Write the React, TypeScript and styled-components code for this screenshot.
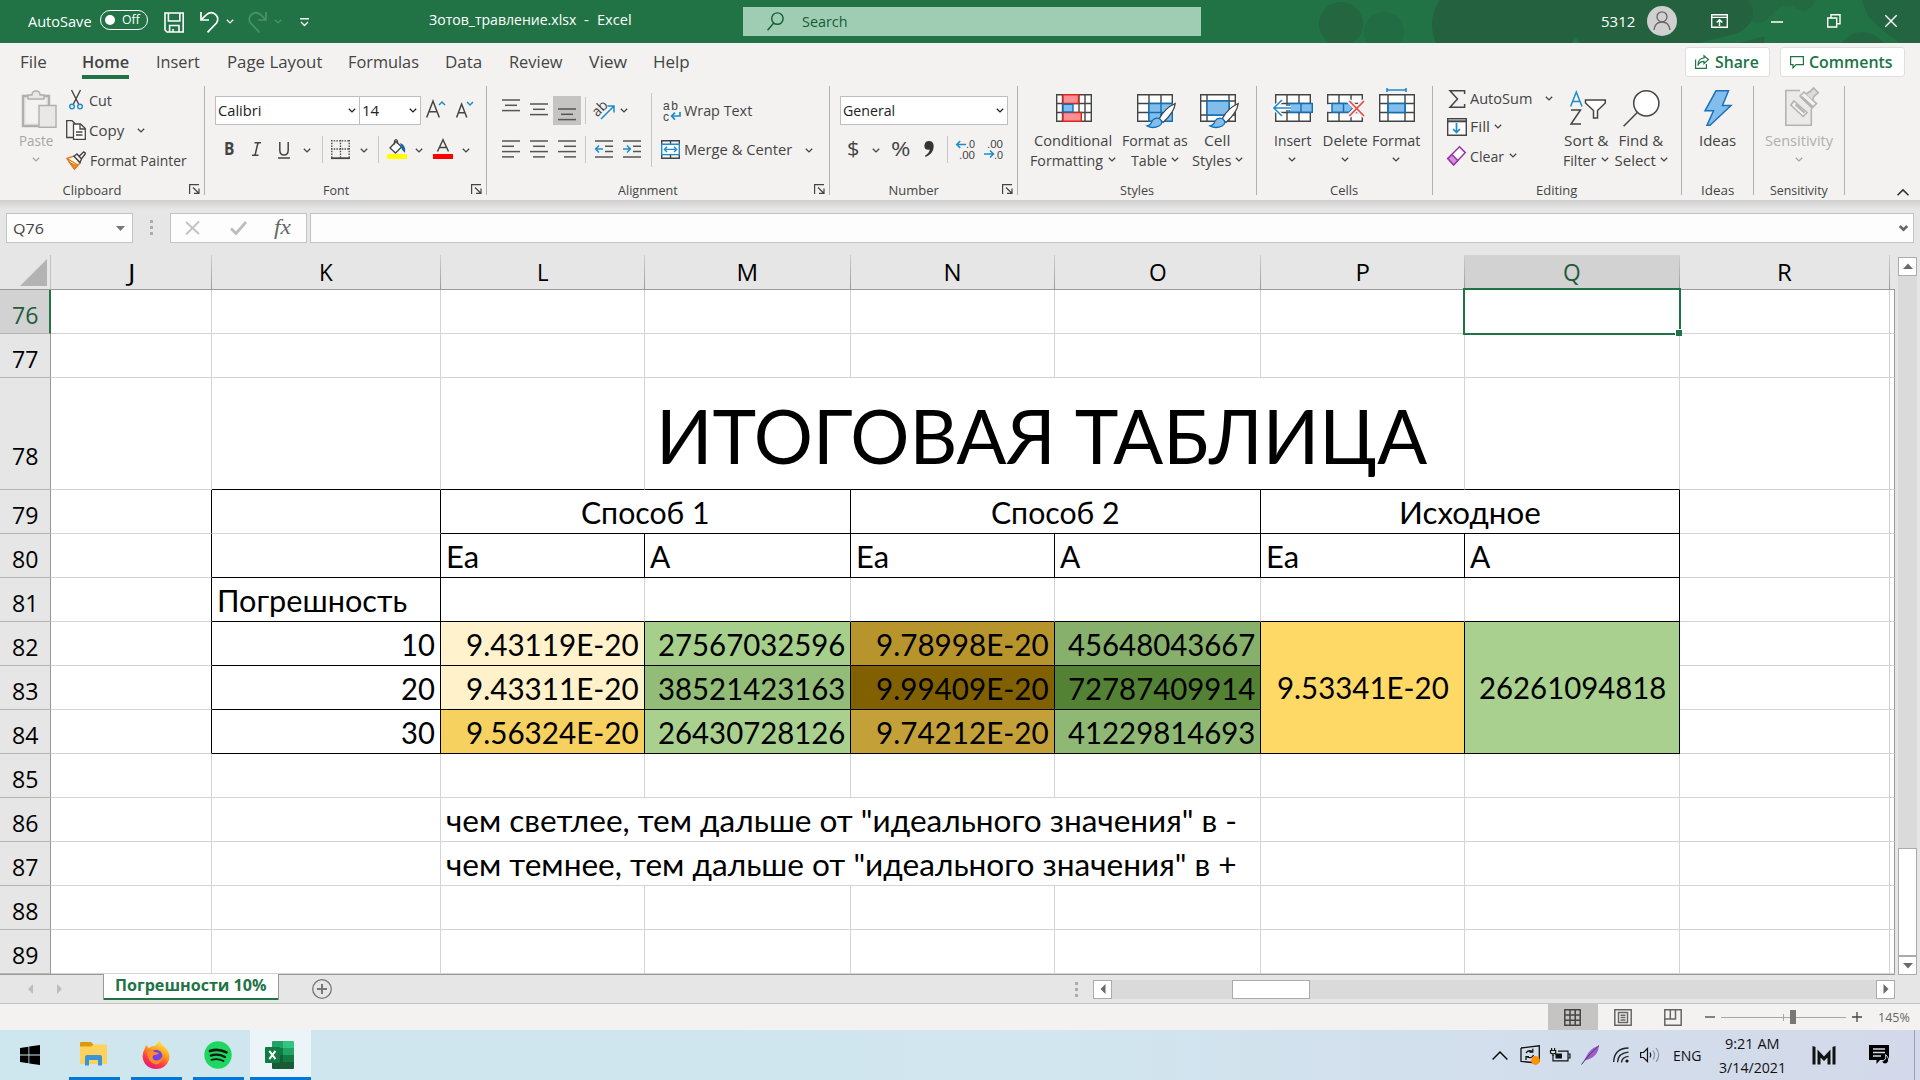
import React, { useLayoutEffect, useRef, useState } from 'react';
import styled, { createGlobalStyle, css } from 'styled-components';

const UI = `"Open Sans", "Noto Sans", sans-serif`;
const SHEET = `Lato, "Open Sans", sans-serif`;
const INK = '#444444';
const BLUE = '#1e8bcd';
const GREEN = '#217346';

const Global = createGlobalStyle`
  * { box-sizing: border-box; }
  body { margin: 0; overflow: hidden; background: #e6e6e6; }
  svg { display: block; flex: none; overflow: visible; }
`;

/* ---------- text set to a known width ---------- */

const FitBox = styled.span<{ $w: number; $ml?: number; $size?: number; $color?: string; $bold?: boolean; $font?: string; $weight?: number }>`
  display: block;
  flex: none;
  width: ${(p) => p.$w}px;
  margin-left: ${(p) => p.$ml ?? 0}px;
  font-family: ${(p) => p.$font ?? UI};
  font-size: ${(p) => p.$size ?? 15}px;
  line-height: 1.36;
  font-weight: ${(p) => p.$weight ?? (p.$bold ? 600 : 400)};
  color: ${(p) => p.$color ?? INK};
  white-space: nowrap;
`;
const FitInner = styled.span`
  display: inline-block;
  transform-origin: 0 50%;
`;

type FitProps = { w: number; ml?: number; size?: number; color?: string; bold?: boolean; font?: string; weight?: number; children: React.ReactNode };
function Fit({ w, ml, size, color, bold, font, weight, children }: FitProps) {
  const ref = useRef<HTMLSpanElement>(null);
  const [k, setK] = useState(1);
  useLayoutEffect(() => {
    if (ref.current) setK(w / ref.current.offsetWidth);
  }, [w, children]);
  return (
    <FitBox $w={w} $ml={ml} $size={size} $color={color} $bold={bold} $font={font} $weight={weight}>
      <FitInner ref={ref} style={{ transform: `scaleX(${k})` }}>{children}</FitInner>
    </FitBox>
  );
}

/* ---------- generic parts ---------- */

const Screen = styled.div`
  width: 1920px;
  height: 1080px;
  display: flex;
  flex-direction: column;
  overflow: hidden;
`;
const Row = styled.div<{ $h?: number; $mt?: number; $pl?: number }>`
  display: flex;
  align-items: center;
  flex: none;
  height: ${(p) => (p.$h ? `${p.$h}px` : 'auto')};
  margin-top: ${(p) => p.$mt ?? 0}px;
  padding-left: ${(p) => p.$pl ?? 0}px;
`;
const Item = styled.div<{ $ml?: number; $mt?: number }>`
  display: flex;
  flex: none;
  margin-left: ${(p) => p.$ml ?? 0}px;
  margin-top: ${(p) => p.$mt ?? 0}px;
`;
const Column = styled.div<{ $w?: number; $ml?: number }>`
  display: flex;
  flex-direction: column;
  flex: none;
  width: ${(p) => (p.$w ? `${p.$w}px` : 'auto')};
  margin-left: ${(p) => p.$ml ?? 0}px;
`;
const Rule = styled.div<{ $h?: number; $ml?: number }>`
  flex: none;
  width: 1px;
  height: ${(p) => p.$h ?? 27}px;
  margin-left: ${(p) => p.$ml ?? 0}px;
  background: #c8c6c4;
`;

const Chev = ({ ml = 0, mt = 0, color = INK }: { ml?: number; mt?: number; color?: string }) => (
  <Item $ml={ml} $mt={mt}>
    <svg width="8" height="5" viewBox="0 0 8 5"><path d="M.8.7 4 3.9 7.2.7" fill="none" stroke={color} strokeWidth="1.3" /></svg>
  </Item>
);

/* ---------- title bar ---------- */

const TitleBar = styled.header`
  position: relative;
  display: flex;
  align-items: center;
  flex: none;
  height: 43px;
  background: ${GREEN};
`;
const TitleArt = styled.svg`
  position: absolute;
  right: 0;
  top: 0;
  overflow: hidden;
`;
const TitleItems = styled.div`
  position: relative;
  display: flex;
  align-items: center;
  height: 43px;
`;
const Toggle = styled.div`
  display: flex;
  align-items: center;
  flex: none;
  width: 48px;
  height: 20px;
  margin-left: 8px;
  margin-top: -3px;
  border: 1.5px solid #fff;
  border-radius: 10px;
`;
const Knob = styled.div`
  width: 10px;
  height: 10px;
  margin-left: 4px;
  border-radius: 50%;
  background: #fff;
`;
const SearchBox = styled.div`
  display: flex;
  align-items: center;
  flex: none;
  width: 458px;
  height: 29px;
  margin-left: 111px;
  background: #9fcdb3;
`;

const Title = () => (
  <TitleBar>
    <TitleArt width="620" height="43" viewBox="1300 0 620 43">
      <g fill="#24623f">
        <circle cx="1341" cy="24" r="22" opacity=".75" />
        <circle cx="1384" cy="32" r="20" opacity=".4" />
        <path d="M1440 0H1566Q1558 20 1577 32L1572 43H1436Q1426 20 1440 0Z" />
        <path d="M1563 0H1748Q1762 20 1738 33L1700 43H1580Q1560 20 1563 0Z" />
        <path d="M1740 43 1765 36 1764 43ZM1842 43Q1850 32 1862 32T1884 43ZM1862 0H1920V43H1900Q1880 30 1868 16Z" opacity=".8" />
        <path d="M1735 0H1815Q1808 16 1796 8T1770 16 1745 12Z" opacity=".6" />
      </g>
    </TitleArt>
    <TitleItems>
      <Fit ml={28} w={64} size={15} color="#fff">AutoSave</Fit>
      <Toggle>
        <Knob />
        <Fit ml={7} w={18} size={13} color="#fff">Off</Fit>
      </Toggle>
      <Item $ml={16} $mt={1}>
        <svg width="20" height="21" viewBox="0 0 20 21" fill="none" stroke="#fff" strokeWidth="1.6"><path d="M1 1H19.2V20H3L1 18ZM4.4 1V9H15.8V1M5.6 20V13.5H15V20M9 20V17" /></svg>
      </Item>
      <Item $ml={16} $mt={1}>
        <svg width="19" height="21" viewBox="0 0 19 21" fill="none" stroke="#fff" strokeWidth="1.7"><path d="M1 0V8H9M1.3 7.6 6.5 2.6C13-2.5 20.5 4.5 16.5 11L7.5 20.3" /></svg>
      </Item>
      <Chev ml={7} color="#fff" />
      <Item $ml={14} $mt={1}>
        <svg width="19" height="21" viewBox="0 0 19 21" fill="none" stroke="#4c9269" strokeWidth="1.7"><path d="M18 0V8H10M17.7 7.6 12.5 2.6C6-2.5-1.5 4.5 2.5 11L11.5 20.3" /></svg>
      </Item>
      <Chev ml={7} color="#4c9269" />
      <Item $ml={18} $mt={1}>
        <svg width="9" height="9" viewBox="0 0 9 9" fill="none" stroke="#fff" strokeWidth="1.4"><path d="M0 .8H9M1 4 4.5 7.5 8 4" /></svg>
      </Item>
      <Item $ml={120} $mt={-4}><Fit w={147} size={15} color="#fff">Зотов_травление.xlsx</Fit></Item>
      <Item $ml={8} $mt={-4}><Fit w={5} size={15} color="#fff">-</Fit></Item>
      <Item $ml={8} $mt={-4}><Fit w={35} size={15} color="#fff">Excel</Fit></Item>
      <SearchBox>
        <Item $ml={24} $mt={-1}>
          <svg width="17" height="19" viewBox="0 0 17 19" fill="none" stroke="#155c33" strokeWidth="1.4"><circle cx="10.4" cy="6.6" r="5.7" /><path d="M6.8 11 .5 18.2" /></svg>
        </Item>
        <Fit ml={18} w={46} size={15} color="#155c33">Search</Fit>
      </SearchBox>
      <Fit ml={400} w={34} size={15} color="#fff">5312</Fit>
      <Item $ml={12} $mt={-1}>
        <svg width="30" height="30" viewBox="0 0 30 30"><circle cx="15" cy="15" r="15" fill="#d0d0d0" /><g fill="none" stroke="#666" strokeWidth="1.3"><circle cx="15" cy="10.8" r="5" /><path d="M7 24Q8 16 15 16T23 24" /></g></svg>
      </Item>
      <Item $ml={34} $mt={-1}>
        <svg width="17" height="14" viewBox="0 0 17 14" fill="none" stroke="#fff" strokeWidth="1.4"><path d="M.7.7H16.3V13.3H.7ZM.7 3.4H16.3M8.5 12V6M5.6 8.6 8.5 5.7 11.4 8.6" /></svg>
      </Item>
      <Item $ml={43}><svg width="12" height="2" viewBox="0 0 12 2"><path d="M0 1H12" stroke="#fff" strokeWidth="1.5" /></svg></Item>
      <Item $ml={44} $mt={-1}>
        <svg width="14" height="14" viewBox="0 0 14 14" fill="none" stroke="#fff" strokeWidth="1.4"><path d="M.7 4H9.7V13H.7ZM4 4V.8H13V9.8H9.8" /></svg>
      </Item>
      <Item $ml={44} $mt={-1}><svg width="12" height="12" viewBox="0 0 12 12"><path d="M.3.3 11.7 11.7M11.7.3.3 11.7" stroke="#fff" strokeWidth="1.4" /></svg></Item>
    </TitleItems>
  </TitleBar>
);

/* ---------- ribbon tabs ---------- */

const TabBar = styled.nav`
  display: flex;
  flex: none;
  height: 43px;
  background: #f3f2f1;
`;
const TabItem = styled.div<{ $ml: number; $active?: boolean }>`
  height: 36px;
  margin-left: ${(p) => p.$ml}px;
  padding-top: 7px;
  ${(p) => p.$active && css`border-bottom: 4px solid ${GREEN};`}
`;
const WhiteButton = styled.div<{ $w: number; $ml: number }>`
  display: flex;
  align-items: center;
  width: ${(p) => p.$w}px;
  height: 30px;
  margin: 4px 0 0 ${(p) => p.$ml}px;
  padding-left: 9px;
  background: #fff;
  border: 1px solid #e1dfdd;
  border-radius: 3px;
`;
const TABS: [string, number, number][] = [
  ['File', 20, 27], ['Home', 35, 47], ['Insert', 27, 44], ['Page Layout', 27, 95], ['Formulas', 26, 71],
  ['Data', 26, 37], ['Review', 27, 54], ['View', 26, 38], ['Help', 26, 37],
];
const Tabs = () => (
  <TabBar>
    {TABS.map(([t, ml, w]) => (
      <TabItem key={t} $ml={ml} $active={t === 'Home'}>
        <Fit w={w} size={17} bold={t === 'Home'}>{t}</Fit>
      </TabItem>
    ))}
    <WhiteButton $w={85} $ml={995}>
      <svg width="14" height="14" viewBox="0 0 14 14" fill="none" stroke={GREEN} strokeWidth="1.2"><path d="M.6 4.5V13.4H11.4V9M9 .8 13.4 4.6 9 8.6V6.4C5 6.4 4 8 3 10.4 3 6 5 3.2 9 3Z" /></svg>
      <Fit ml={6} w={44} size={16.5} bold color={GREEN}>Share</Fit>
    </WhiteButton>
    <WhiteButton $w={125} $ml={10}>
      <svg width="14" height="13" viewBox="0 0 14 13" fill="none" stroke={GREEN} strokeWidth="1.2"><path d="M.6.6H13.4V8.6H6L3 12V8.6H.6Z" /></svg>
      <Fit ml={5} w={84} size={16.5} bold color={GREEN}>Comments</Fit>
    </WhiteButton>
  </TabBar>
);

/* ---------- ribbon ---------- */

const Ribbon = styled.section`
  display: flex;
  flex: none;
  height: 114px;
  background: #f3f2f1;
`;
const GroupBox = styled.div<{ $w: number }>`
  display: flex;
  flex-direction: column;
  flex: none;
  width: ${(p) => p.$w}px;
  height: 109px;
  border-right: 1px solid #b3b0ad;
`;
const GroupBody = styled.div`
  display: flex;
  height: 94px;
  flex: none;
`;
const GroupFooter = styled.div<{ $launch?: boolean }>`
  display: grid;
  grid-template-columns: 1fr ${(p) => (p.$launch ? 20 : 1)}px;
  justify-items: center;
  align-items: center;
  height: 20px;
  margin-top: 2px;
`;
const ComboBox = styled.div<{ $w: number; $ml?: number }>`
  display: flex;
  align-items: center;
  justify-content: space-between;
  flex: none;
  width: ${(p) => p.$w}px;
  height: 29px;
  margin-left: ${(p) => p.$ml ?? 0}px;
  padding: 0 3px 0 2px;
  border: 1px solid #c0bebc;
  background: #fff;
`;
const Pressed = styled.div`
  display: flex;
  align-items: center;
  justify-content: center;
  width: 28px;
  height: 29px;
  margin-left: 5px;
  background: #c6c4c2;
`;
const BigButton = styled.div<{ $w: number; $ml?: number }>`
  display: flex;
  flex-direction: column;
  align-items: center;
  flex: none;
  width: ${(p) => p.$w}px;
  margin-left: ${(p) => p.$ml ?? 0}px;
`;
const BigIcon = styled.div`
  display: flex;
  justify-content: center;
  height: 44px;
`;

const Launcher = () => (
  <Item $mt={-3}><svg width="11" height="10" viewBox="0 0 11 10" fill="none" stroke={INK} strokeWidth="1.2"><path d="M.6 10V.6H10M4 3.5 9.6 9M10 4.5V9.4H5" /></svg></Item>
);
type GroupProps = { w: number; label: string; lw: number; launch?: boolean; children: React.ReactNode };
const Group = ({ w, label, lw, launch, children }: GroupProps) => (
  <GroupBox $w={w}>
    <GroupBody>{children}</GroupBody>
    <GroupFooter $launch={launch}><Fit w={lw} size={13}>{label}</Fit>{launch && <Launcher />}</GroupFooter>
  </GroupBox>
);

const Lines = ({ widths, align = 'l', gap = 5.3 }: { widths: number[]; align?: 'l' | 'c' | 'r'; gap?: number }) => (
  <svg width="18" height={(widths.length - 1) * gap + 2} viewBox={`0 0 18 ${(widths.length - 1) * gap + 2}`} stroke="#555" strokeWidth="1.5">
    {widths.map((w, i) => {
      const x = align === 'l' ? 0 : align === 'c' ? (18 - w) / 2 : 18 - w;
      return <path key={i} d={`M${x} ${i * gap + 1}H${x + w}`} />;
    })}
  </svg>
);

const IndentIcon = ({ out }: { out?: boolean }) => (
  <svg width="18" height="18" viewBox="0 0 18 18" fill="none" strokeWidth="1.5">
    <path d="M0 1H18M10 6.3H18M10 11.6H18M0 17H18" stroke="#555" />
    <path d={out ? 'M8 9H.8M4 5.5.6 9 4 12.5' : 'M0 9H7.2M4 5.5 7.4 9 4 12.5'} stroke={BLUE} />
  </svg>
);

const PasteIcon = () => (
  <svg width="35" height="38" viewBox="0 0 35 38" fill="#e9e8e7" stroke="#b1afad" strokeWidth="1.4">
    <path d="M1 6H27V36H1Z" strokeWidth="2.4" />
    <path d="M4 9H24V33H4Z" fill="#f3f2f1" stroke="none" />
    <path d="M6 9V5H10Q10 1 14 1T18 5H22V9Z" />
    <path d="M17 15.5H34V37.3H17Z" />
  </svg>
);
const CutIcon = () => (
  <svg width="14" height="20" viewBox="0 0 14 20" fill="none" strokeWidth="1.4">
    <path d="M2.5 0 9.6 14M11.5 0 4.4 14" stroke={INK} />
    <circle cx="3" cy="16.6" r="2.3" stroke={BLUE} /><circle cx="11" cy="16.6" r="2.3" stroke={BLUE} />
  </svg>
);
const CopyIcon = () => (
  <svg width="20" height="20" viewBox="0 0 20 20" fill="none" stroke={INK} strokeWidth="1.3">
    <path d="M7 17.5H.7V.7H6L9.5 4" /><path d="M7.5 4H14.5L19.3 8.6V19.3H7.5Z" fill="#fff" /><path d="M14 4.4V9H19M10 12H16.5M10 15H16.5" />
  </svg>
);
const PainterIcon = () => (
  <svg width="20" height="19" viewBox="0 0 20 19" fill="none" strokeWidth="1.4">
    <path d="M1 7.5 8 5 14 12 8.5 18Z" fill="#fff" stroke="#e07b1e" /><path d="M1 7.5 12 14M4 12 8.5 18 11 15Z" fill="#f29a3f" stroke="#e07b1e" />
    <path d="M8 5.3 11 3 15.5 8 14 11.5ZM13.4 5 17.6 1Q20 1.4 19 3.3L15.6 7.6" stroke={INK} fill="#f3f2f1" />
  </svg>
);
const BordersIcon = () => (
  <svg width="19" height="19" viewBox="0 0 19 19" fill="none" stroke={INK} strokeWidth="1.3">
    <path d="M.8 0V18M18.2 0V18M0 .8H19M9.5 0V18M0 9H19" strokeDasharray="1.5 1.2" /><path d="M0 18.2H19" strokeWidth="1.8" />
  </svg>
);
const FillIcon = () => (
  <svg width="20" height="20" viewBox="0 0 20 20" fill="none" stroke={INK} strokeWidth="1.3">
    <path d="M3 9 9 2.5 14.5 8 8.5 14Z" fill="#fff" /><path d="M7.5 5.5V2Q9 -.8 10.5 2V5" />
    <path d="M14 5Q18 7 17.5 12.5 14.5 10 14 5Z" fill="#1565a8" stroke="#1565a8" /><path d="M0 15H20V20H0Z" fill="#ff0" stroke="none" />
  </svg>
);
const OrientIcon = () => (
  <svg width="21" height="20" viewBox="0 0 21 20">
    <text x="-2" y="13" transform="rotate(-45 6 9)" fontFamily="Open Sans" fontSize="14" fill={INK}>ab</text>
    <path d="M7 19 20 6M13.5 6H20V12.5" fill="none" stroke={BLUE} strokeWidth="1.5" />
  </svg>
);
const WrapIcon = () => (
  <svg width="18" height="20" viewBox="0 0 18 20">
    <text x="0" y="8.5" fontFamily="Liberation Sans" fontSize="12" fill={INK} textLength="15">ab</text>
    <text x="0" y="19.5" fontFamily="Liberation Sans" fontSize="12" fill={INK}>c</text>
    <path d="M17 11V15H9M12 11.6 8.6 15 12 18.6" fill="none" stroke={BLUE} strokeWidth="1.7" />
  </svg>
);
const MergeIcon = () => (
  <svg width="19" height="19" viewBox="0 0 19 19" fill="none" stroke={INK} strokeWidth="1.4">
    <path d="M.7.7H18.3V18.3H.7ZM9.5.7V4M9.5 15V18.3" />
    <path d="M.7 4.2H18.3V14.6H.7Z" fill="#fff" stroke={BLUE} /><path d="M3.5 9.4H15.5M6 6.8 3.4 9.4 6 12M13 6.8 15.6 9.4 13 12" stroke={BLUE} />
  </svg>
);
const DecimalIcon = ({ less }: { less?: boolean }) => (
  <svg width="19" height="20" viewBox="0 0 19 20" fontFamily="Liberation Sans" fontSize="11.5" fill={INK}>
    <text x={less ? 3 : 10} y="8.5" textLength={less ? 16 : 9} lengthAdjust="spacingAndGlyphs">{less ? '.00' : '.0'}</text>
    <text x={less ? 10 : 3} y="19.5" textLength={less ? 9 : 16} lengthAdjust="spacingAndGlyphs">{less ? '.0' : '.00'}</text>
    <path d={less ? 'M0 15H9.5M6 11.5 9.5 15 6 18.5' : 'M10 5.5H.8M4.2 2 .7 5.5 4.2 9'} fill="none" stroke={BLUE} strokeWidth="1.5" />
  </svg>
);
const sheetLines = 'M.7.7H35.3V27.3H.7ZM12 .7V27.3M24 .7V27.3M.7 9.5H35.3M.7 18.5H35.3';
const BrushShape = () => (
  <>
    <path d="M22 25Q28 14 38.2 9.5 37.5 18 26 28.5Z" fill="#fff" stroke={INK} strokeWidth="1.3" />
    <path d="M10 32Q14 31 15 27 18 22.5 23 25 27 29 22 32 16 35 10 32Z" fill="#83bdec" stroke="#0f6fb9" strokeWidth="1.3" />
  </>
);
const CondIcon = () => (
  <svg width="36" height="28" viewBox="0 0 36 28" strokeWidth="1.4">
    <path d="M.7.7H35.3V27.3H.7ZM6.5 .7V27.3M29 .7V27.3M.7 9.5H35.3M.7 18.5H35.3M23 .7V27.3" fill="#fff" stroke={INK} />
    <path d="M7 .7H22.5V9.5H7ZM7 18.5H25.3V27.3H7Z" fill="#ff8f92" stroke="#d9261c" /><path d="M7 10.2H17V18H7Z" fill="#83bdec" stroke="#0f6fb9" />
  </svg>
);
const FormatTableIcon = () => (
  <svg width="38" height="35" viewBox="0 0 38 35" strokeWidth="1.4">
    <path d={sheetLines} fill="#fff" stroke={INK} /><path d="M12 9.5H35.3V27.3H12ZM24 9.5V27.3M12 18.5H35.3" fill="#83bdec" stroke="#0f6fb9" /><BrushShape />
  </svg>
);
const CellStylesIcon = () => (
  <svg width="38" height="35" viewBox="0 0 38 35" strokeWidth="1.4">
    <path d="M.7.7H35.3V27.3H.7ZM7 .7V27.3M29 .7V27.3M.7 7H35.3M.7 21H35.3" fill="#fff" stroke={INK} /><path d="M7 7H29V21H7Z" fill="#83bdec" stroke="#0f6fb9" /><BrushShape />
  </svg>
);
const InsertIcon = () => (
  <svg width="40" height="28" viewBox="0 0 40 28" fill="none" strokeWidth="1.4">
    <path d="M2.7.7H37.3V27.3H2.7ZM14 .7V27.3M26 .7V27.3M2.7 9.5H37.3M2.7 18.5H37.3" fill="#fff" stroke={INK} />
    <path d="M16 9.5H39.3V18.3H16ZM28 9.5V18.3" fill="#83bdec" stroke="#0f6fb9" />
    <path d="M18 14H1M9 6 .9 14 9 22" stroke="#fff" strokeWidth="4" /><path d="M18 14H1M9 6 .9 14 9 22" stroke={BLUE} strokeWidth="1.6" />
  </svg>
);
const DeleteIcon = () => (
  <svg width="37" height="28" viewBox="0 0 37 28" fill="none" strokeWidth="1.4">
    <path d="M.7.7H35.3V27.3H.7ZM12 .7V27.3M24 .7V27.3M.7 9.5H35.3M.7 18.5H35.3" fill="#fff" stroke={INK} />
    <path d="M0 10.2H40V17.8H0Z" fill="#f3f2f1" /><path d="M5 9.5H22L26 14 22 18.3H5ZM16.5 9.5V18.3" fill="#83bdec" stroke="#0f6fb9" />
    <path d="M22 7 37 22M37 7 22 22" stroke="#f3f2f1" strokeWidth="5" /><path d="M22.3 7 37 22M37 7 22.3 22" stroke="#e8433f" strokeWidth="1.6" />
  </svg>
);
const FormatIcon = () => (
  <svg width="36" height="34" viewBox="0 0 36 34" fill="none" strokeWidth="1.4">
    <path d="M.7 6.7H35.3V33.3H.7ZM9 6.7V33.3M26 6.7V33.3M.7 15.5H35.3M.7 24.5H35.3" fill="#fff" stroke={INK} />
    <path d="M9 15.5H26V24.5H9Z" fill="#83bdec" stroke="#0f6fb9" strokeWidth="1.7" /><path d="M8 2H27M8 0V4M27 0V4" stroke={BLUE} strokeWidth="1.6" />
  </svg>
);
const SortIcon = () => (
  <svg width="36" height="34" viewBox="0 0 36 34" fill="none" strokeWidth="1.5">
    <path d="M.6 15.5 6.3 1 12 15.5M2.5 10.5H10" stroke={BLUE} /><path d="M1 19H10.5L1 33H11" stroke={INK} />
    <path d="M15.5 9H35.3V12L27.5 19.5V27H23.5V19.5L15.5 12Z" fill="#fff" stroke={INK} />
  </svg>
);
const FindIcon = () => (
  <svg width="37" height="37" viewBox="0 0 37 37" stroke={INK} strokeWidth="1.5"><circle cx="23.3" cy="13.3" r="12.6" fill="#fff" /><path d="M14.3 22.5.6 36.3" /></svg>
);
const IdeasIcon = () => (
  <svg width="28" height="36" viewBox="0 0 28 36"><path d="M12 .8H24.5L18.5 15.5H27L6 35.2H3L9.5 20.8H1Z" fill="#83bdec" stroke="#1a72bd" strokeWidth="1.5" /></svg>
);
const SensitivityIcon = () => (
  <svg width="34" height="38" viewBox="0 0 34 38" fill="none" stroke="#b5b3b1" strokeWidth="1.6">
    <path d="M15 2.5H.8V37.3H26.3V21" fill="#ebeae9" />
    <path d="M9 13 22 24.5 18 28.5 5.8 17Z" fill="#f3f2f1" /><path d="M10.5 16.5 19.5 24.8" strokeWidth="2" />
    <path d="M15 8 19 4 31.5 15.5 27 20Z" fill="#f3f2f1" /><path d="M21 6 25 3.5 28.5 0 33.3 4.8 29 8.5 27.5 12" fill="#dcdbda" /><path d="M16.5 9 27.5 19" strokeWidth="2.5" />
  </svg>
);

const RibbonBar = () => (
  <Ribbon>
    <Group w={205} label="Clipboard" lw={59} launch>
      <BigButton $w={36} $ml={18}>
        <BigIcon><Item $ml={6} $mt={4}><PasteIcon /></Item></BigIcon>
        <Fit w={34} color="#a8a6a4">Paste</Fit>
        <Chev mt={7} color="#a8a6a4" />
      </BigButton>
      <Column $ml={12}>
        <Row $h={30} $mt={-1}><Item $ml={3}><CutIcon /></Item><Fit ml={6} w={23}>Cut</Fit></Row>
        <Row $h={30}><CopyIcon /><Fit ml={3} w={35}>Copy</Fit><Chev ml={13} /></Row>
        <Row $h={31}><PainterIcon /><Fit ml={4} w={97}>Format Painter</Fit></Row>
      </Column>
    </Group>
    <Group w={282} label="Font" lw={26} launch>
      <Column>
        <Row $mt={10} $pl={10}>
          <ComboBox $w={145}><Fit w={43} color="#222">Calibri</Fit><Chev color="#222" /></ComboBox>
          <ComboBox $w={62} $ml={-1}><Fit w={17} color="#222">14</Fit><Chev color="#222" /></ComboBox>
          <Item $ml={5} $mt={-4}><svg width="19" height="18" viewBox="0 0 19 18" fill="none" stroke={INK} strokeWidth="1.5"><path d="M.7 17.5 7 1 13.3 17.5M3 11.8H11" /><path d="M13 5 16 2 19 5" stroke={BLUE} /></svg></Item>
          <Item $ml={11} $mt={-2}><svg width="17" height="16" viewBox="0 0 17 16" fill="none" stroke={INK} strokeWidth="1.5"><path d="M.6 15.5 5.6 2 10.8 15.5M2.4 10.8H9" /><path d="M11 0 14 3 17 0" stroke={BLUE} /></svg></Item>
        </Row>
        <Row $h={34} $mt={7} $pl={19}>
          <Fit w={10} size={17} weight={700}>B</Fit>
          <Item $ml={18}><svg width="9" height="14" viewBox="0 0 9 14" fill="none" stroke={INK} strokeWidth="1.5"><path d="M2.5.8H9M0 13.2H6.5M6 .8 3 13.2" /></svg></Item>
          <Item $ml={17} $mt={2}><svg width="12" height="17" viewBox="0 0 12 17" fill="none" stroke={INK} strokeWidth="1.5"><path d="M1.8 0V8Q1.8 13 6 13T10.2 8V0M0 16H12" /></svg></Item>
          <Chev ml={13} mt={2} /><Rule $ml={11} />
          <Item $ml={8}><BordersIcon /></Item><Chev ml={10} mt={2} /><Rule $ml={10} />
          <Item $ml={8}><FillIcon /></Item><Chev ml={8} mt={2} />
          <Item $ml={10}><svg width="20" height="20" viewBox="0 0 20 20"><path d="M4.5 12.5 10 .8 15.5 12.5M6.5 8.6H13.5" fill="none" stroke={INK} strokeWidth="1.5" /><path d="M0 15H20V20H0Z" fill="#f00" /></svg></Item>
          <Chev ml={9} mt={2} />
        </Row>
      </Column>
    </Group>
    <Group w={343} label="Alignment" lw={60} launch>
      <Column>
        <Row $mt={10} $pl={15}>
          <Item $mt={-10}><Lines widths={[18, 12, 18]} align="c" /></Item>
          <Item $ml={10} $mt={-3}><Lines widths={[18, 12, 18]} align="c" /></Item>
          <Pressed><Item $mt={7}><Lines widths={[18, 12, 18]} align="c" /></Item></Pressed>
          <Rule $ml={4} />
          <Item $ml={8} $mt={-2}><OrientIcon /></Item>
          <Chev ml={5} />
        </Row>
        <Row $h={34} $mt={7} $pl={15}>
          <Lines widths={[18, 12, 18, 12]} />
          <Item $ml={10}><Lines widths={[18, 12, 18, 12]} align="c" /></Item>
          <Item $ml={10}><Lines widths={[18, 12, 18, 12]} align="r" /></Item>
          <Rule $ml={9} />
          <Item $ml={9}><IndentIcon out /></Item>
          <Item $ml={10}><IndentIcon /></Item>
        </Row>
      </Column>
      <Item $ml={10} $mt={7}><Rule $h={74} /></Item>
      <Column $ml={9}>
        <Row $h={29} $mt={10}><Item $ml={2}><WrapIcon /></Item><Fit ml={3} w={68}>Wrap Text</Fit></Row>
        <Row $h={34} $mt={7}><MergeIcon /><Fit ml={4} w={108}>Merge &amp; Center</Fit><Chev ml={13} mt={2} /></Row>
      </Column>
    </Group>
    <Group w={188} label="Number" lw={50} launch>
      <Column>
        <Row $mt={10} $pl={10}><ComboBox $w={168}><Fit w={52} color="#222">General</Fit><Chev color="#222" /></ComboBox></Row>
        <Row $h={34} $mt={7} $pl={17}>
          <Fit w={12} size={20}>$</Fit><Chev ml={13} mt={2} />
          <Fit ml={11} w={20} size={20}>%</Fit>
          <Item $ml={13}><svg width="10" height="16" viewBox="0 0 10 16"><path d="M5 0Q9.7 0 9.7 5.5 9.5 12.5 1.6 16L1 14.8Q5.5 12 5.7 8.6 0 9.2.4 4.4 1 0 5 0Z" fill="#333" /></svg></Item>
          <Rule $ml={13} />
          <Item $ml={8}><DecimalIcon /></Item>
          <Item $ml={9}><DecimalIcon less /></Item>
        </Row>
      </Column>
    </Group>
    <Group w={239} label="Styles" lw={34}>
      <BigButton $w={88} $ml={11}>
        <BigIcon><Item $ml={2} $mt={8}><CondIcon /></Item></BigIcon>
        <Fit w={78}>Conditional</Fit>
        <Row><Fit w={73}>Formatting</Fit><Chev ml={5} mt={-3} /></Row>
      </BigButton>
      <BigButton $w={68} $ml={4}>
        <BigIcon><Item $ml={2} $mt={8}><FormatTableIcon /></Item></BigIcon>
        <Fit w={66}>Format as</Fit>
        <Row $mt={0}><Fit w={36}>Table</Fit><Chev ml={4} mt={-3} /></Row>
      </BigButton>
      <BigButton $w={52} $ml={2}>
        <BigIcon><Item $ml={4} $mt={8}><CellStylesIcon /></Item></BigIcon>
        <Fit w={26}>Cell</Fit>
        <Row><Fit w={39}>Styles</Fit><Chev ml={4} mt={-3} /></Row>
      </BigButton>
    </Group>
    <Group w={176} label="Cells" lw={28}>
      <BigButton $w={44} $ml={13}>
        <BigIcon><Item $ml={2} $mt={8}><InsertIcon /></Item></BigIcon><Fit w={37}>Insert</Fit><Chev mt={7} />
      </BigButton>
      <BigButton $w={48} $ml={7}>
        <BigIcon><Item $mt={8}><DeleteIcon /></Item></BigIcon><Fit w={45}>Delete</Fit><Chev mt={7} />
      </BigButton>
      <BigButton $w={50} $ml={2}>
        <BigIcon><Item $ml={2} $mt={2}><FormatIcon /></Item></BigIcon><Fit w={48}>Format</Fit><Chev mt={7} />
      </BigButton>
    </Group>
    <Group w={249} label="Editing" lw={41}>
      <Column $ml={14} $w={114}>
        <Row $h={25}>
          <Item $ml={2}><svg width="17" height="18" viewBox="0 0 17 18" fill="none" stroke={INK} strokeWidth="1.5"><path d="M15.6 4V.8H1L8.5 9 1 17.2H15.6V14" /></svg></Item>
          <Fit ml={4} w={62}>AutoSum</Fit><Chev ml={13} mt={-1} />
        </Row>
        <Row $h={31}>
          <svg width="20" height="18" viewBox="0 0 20 18" fill="#fff" stroke={INK} strokeWidth="1.4"><path d="M.7.7H19.3V17.3H.7Z" /><path d="M.7 3.3H19.3" strokeWidth="2" /><path d="M9.5 5V14.5M6 11 9.5 14.5 13 11" fill="none" stroke={BLUE} strokeWidth="1.7" /></svg>
          <Fit ml={3} w={20}>Fill</Fit><Chev ml={4} mt={-1} />
        </Row>
        <Row $h={28}>
          <svg width="19" height="20" viewBox="0 0 19 20" strokeWidth="1.5" stroke="#9a35a8"><path d="M.8 12.5 12.5.8 18.3 6.6 6.6 19Z" fill="#fff" /><path d="M.8 12.5 5 8.5 10.8 14.5 6.6 19Z" fill="#d58fe0" /></svg>
          <Fit ml={4} w={34}>Clear</Fit><Chev ml={5} mt={-1} />
        </Row>
      </Column>
      <BigButton $w={50} $ml={0}>
        <BigIcon><Item $ml={4} $mt={5}><SortIcon /></Item></BigIcon><Fit w={45}>Sort &amp;</Fit>
        <Row><Fit w={33}>Filter</Fit><Chev ml={5} mt={-3} /></Row>
      </BigButton>
      <BigButton $w={52} $ml={4}>
        <BigIcon><Item $mt={4}><FindIcon /></Item></BigIcon><Fit w={45}>Find &amp;</Fit>
        <Row><Fit w={41}>Select</Fit><Chev ml={4} mt={-3} /></Row>
      </BigButton>
    </Group>
    <Group w={72} label="Ideas" lw={33}>
      <BigButton $w={71}><BigIcon><Item $mt={4}><IdeasIcon /></Item></BigIcon><Fit w={37}>Ideas</Fit></BigButton>
    </Group>
    <Group w={91} label="Sensitivity" lw={58}>
      <BigButton $w={90}><BigIcon><Item $ml={6} $mt={2}><SensitivityIcon /></Item></BigIcon><Fit w={68} color="#b1afad">Sensitivity</Fit><Chev mt={7} color="#a8a6a4" /></BigButton>
    </Group>
    <Item $ml={52} $mt={103}><svg width="12" height="7" viewBox="0 0 12 7"><path d="M.5 6.3 6 .9 11.5 6.3" fill="none" stroke="#333" strokeWidth="1.6" /></svg></Item>
  </Ribbon>
);

/* ---------- formula bar ---------- */

const FormulaBar = styled.section`
  display: flex;
  align-items: flex-start;
  flex: none;
  height: 55px;
  padding: 13px 0 0 6px;
  background: linear-gradient(#cfcfcf, #e6e6e6 9px);
`;
const Field = styled.div<{ $w: number; $ml?: number }>`
  display: flex;
  align-items: center;
  flex: none;
  width: ${(p) => p.$w}px;
  height: 30px;
  margin-left: ${(p) => p.$ml ?? 0}px;
  background: #fdfdfd;
  border: 1px solid #c3c3c3;
`;
const Dots = styled.div<{ $ml: number; $mt: number }>`
  display: flex;
  flex-direction: column;
  gap: 3px;
  margin: ${(p) => p.$mt}px 0 0 ${(p) => p.$ml}px;
  i { width: 3px; height: 3px; background: #acacac; }
`;
const Formula = () => (
  <FormulaBar>
    <Field $w={127}>
      <Fit ml={6} w={31} size={15}>Q76</Fit>
      <Item $ml={72}><svg width="9" height="5" viewBox="0 0 9 5"><path d="M0 0H9L4.5 5Z" fill="#777" /></svg></Item>
    </Field>
    <Dots $ml={17} $mt={7}><i /><i /><i /></Dots>
    <Field $w={137} $ml={17}>
      <Item $ml={14}><svg width="15" height="14" viewBox="0 0 15 14"><path d="M1 1 14 13M14 .5 1 13.5" stroke="#c3c3c3" strokeWidth="2" /></svg></Item>
      <Item $ml={30}><svg width="17" height="14" viewBox="0 0 17 14"><path d="M1 7.5 6 12.5 16 1" fill="none" stroke="#bdbdbd" strokeWidth="2.8" /></svg></Item>
      <Item $ml={27} $mt={-2}><Fit w={17} size={22} color="#666" font={`"Liberation Serif", serif`}><em>fx</em></Fit></Item>
    </Field>
    <Field $w={1604} $ml={3}>
      <Item $ml={1588}><svg width="9" height="7" viewBox="0 0 9 7"><path d="M.8 1 4.5 4.6 8.2 1" fill="none" stroke="#666" strokeWidth="2.6" /></svg></Item>
    </Field>
  </FormulaBar>
);

/* ---------- worksheet ---------- */

const Work = styled.main`
  display: flex;
  flex: none;
  height: 720px;
  background: #e6e6e6;
`;
const Grid = styled.div`
  display: grid;
  flex: none;
  width: 1895px;
  height: 720px;
  grid-template-columns: 51px 161px 229px 204px 206px 204px 206px 204px 215px 210px 5px;
  grid-template-rows: 35px 44px 44px 112px repeat(11, 44px) 1px;
  border-bottom: 1px solid #999;
`;
const Corner = styled.div`
  display: flex;
  justify-content: flex-end;
  padding: 4px 3px 0 0;
  border-right: 1px solid #c0c0c0;
  border-bottom: 1px solid #999;
`;
const ColHead = styled.div<{ $sel?: boolean; $last?: boolean }>`
  display: flex;
  justify-content: center;
  padding-top: 1px;
  background: ${(p) => (p.$sel ? '#d2d2d2' : '#e6e6e6')};
  border-bottom: 1px solid #999;
  border-right: ${(p) => (p.$last ? '0' : '1px')} solid;
  border-image: linear-gradient(#d0d0d0, #999) 1;
`;
const RowHead = styled.div<{ $sel?: boolean; $tall?: boolean }>`
  grid-column: 1;
  display: flex;
  align-items: flex-end;
  padding: 0 0 ${(p) => (p.$tall ? 16 : 1)}px 12px;
  background: ${(p) => (p.$sel ? '#d2d2d2' : '#e6e6e6')};
  border-right: ${(p) => (p.$sel ? `2px solid ${GREEN}` : '1px solid #999')};
  border-bottom: 1px solid #b5b5b5;
`;
type CellStyle = { $c: number; $r: number; $cs: number; $rs: number; $right: string; $bottom: string; $bg: string; $align: string; $mid: boolean; $title: boolean };
const CellBox = styled.div<CellStyle>`
  position: relative;
  grid-column: ${(p) => p.$c} / span ${(p) => p.$cs};
  grid-row: ${(p) => p.$r} / span ${(p) => p.$rs};
  display: flex;
  justify-content: ${(p) => p.$align};
  align-items: ${(p) => (p.$mid ? 'center' : 'flex-end')};
  padding: ${(p) => (p.$title ? '0 33px 3px 6px' : '0 5px 0 5px')};
  background: ${(p) => p.$bg};
  border-right: 1px solid ${(p) => p.$right};
  border-bottom: 1px solid ${(p) => p.$bottom};
`;
const Selection = styled.div`
  position: absolute;
  left: -2px;
  top: -2px;
  width: 218px;
  height: 47px;
  border: 2px solid ${GREEN};
  z-index: 2;
  &::after {
    content: '';
    position: absolute;
    right: -3px;
    bottom: -3px;
    width: 6px;
    height: 6px;
    background: ${GREEN};
    border: 1px solid #fff;
    border-width: 1px 0 0 1px;
  }
`;

type Cell = { t?: string; w?: number; size?: number; cs?: number; rs?: number; bg?: string; a?: 'l' | 'c' | 'r'; mid?: boolean; right?: string; bottom?: string };
const K = '#000';
const L = '#d4d4d4';
const CONTENT: Record<string, Cell> = {
  M78: { t: 'ИТОГОВАЯ ТАБЛИЦА', w: 771, size: 76, cs: 4, a: 'c', bottom: K },
  J79: { right: K }, J80: { right: K }, J81: { right: K }, J82: { right: K }, J83: { right: K }, J84: { right: K },
  K78: { bottom: K }, L78: { bottom: K }, Q78: { bottom: K },
  K79: { right: K }, L79: { t: 'Способ 1', w: 129, cs: 2, a: 'c', right: K, bottom: K },
  N79: { t: 'Способ 2', w: 129, cs: 2, a: 'c', right: K, bottom: K },
  P79: { t: 'Исходное', w: 142, cs: 2, a: 'c', right: K, bottom: K },
  K80: { right: K, bottom: K },
  L80: { t: 'Ea', w: 33, right: K, bottom: K }, M80: { t: 'A', w: 20, right: K, bottom: K },
  N80: { t: 'Ea', w: 33, right: K, bottom: K }, O80: { t: 'A', w: 20, right: K, bottom: K },
  P80: { t: 'Ea', w: 33, right: K, bottom: K }, Q80: { t: 'A', w: 20, right: K, bottom: K },
  K81: { t: 'Погрешность', w: 190, right: K, bottom: K },
  L81: { bottom: K }, M81: { bottom: K }, N81: { bottom: K }, O81: { bottom: K }, P81: { bottom: K }, Q81: { right: K, bottom: K },
  K82: { t: '10', w: 34, a: 'r', right: K, bottom: K }, K83: { t: '20', w: 34, a: 'r', right: K, bottom: K }, K84: { t: '30', w: 34, a: 'r', right: K, bottom: K },
  L82: { t: '9.43119E-20', w: 173, a: 'r', bg: '#fff2cc', right: K, bottom: K },
  L83: { t: '9.43311E-20', w: 173, a: 'r', bg: '#fff1ca', right: K, bottom: K },
  L84: { t: '9.56324E-20', w: 173, a: 'r', bg: '#f7d160', right: K, bottom: K },
  M82: { t: '27567032596', w: 187, a: 'r', bg: '#a5cf8b', right: K, bottom: K },
  M83: { t: '38521423163', w: 187, a: 'r', bg: '#92bc78', right: K, bottom: K },
  M84: { t: '26430728126', w: 187, a: 'r', bg: '#a9d08e', right: K, bottom: K },
  N82: { t: '9.78998E-20', w: 173, a: 'r', bg: '#b8942c', right: K, bottom: K },
  N83: { t: '9.99409E-20', w: 173, a: 'r', bg: '#806000', right: K, bottom: K },
  N84: { t: '9.74212E-20', w: 173, a: 'r', bg: '#c4a038', right: K, bottom: K },
  O82: { t: '45648043667', w: 187, a: 'r', bg: '#86b06b', right: K, bottom: K },
  O83: { t: '72787409914', w: 187, a: 'r', bg: '#548235', right: K, bottom: K },
  O84: { t: '41229814693', w: 187, a: 'r', bg: '#8eb873', right: K, bottom: K },
  P82: { t: '9.53341E-20', w: 172, rs: 3, a: 'c', mid: true, bg: '#ffd966', right: K, bottom: K },
  Q82: { t: '26261094818', w: 187, rs: 3, a: 'c', mid: true, bg: '#a9d08e', right: K, bottom: K },
  L86: { t: 'чем светлее, тем дальше от "идеального значения" в -', w: 791, cs: 4 },
  L87: { t: 'чем темнее, тем дальше от "идеального значения" в +', w: 791, cs: 4 },
};
const COLS = 'JKLMNOPQR'.split('');
const ROWS = Array.from({ length: 14 }, (_, i) => 76 + i);
const HEAD_W: Record<string, number> = { J: 7, K: 14, L: 12, M: 22, N: 18, O: 18, P: 14, Q: 18, R: 15 };
const JUSTIFY = { l: 'flex-start', c: 'center', r: 'flex-end' };

function cells() {
  const covered = new Set<string>();
  const out: React.ReactNode[] = [];
  ROWS.forEach((row, ri) => {
    COLS.forEach((col, ci) => {
      const id = `${col}${row}`;
      if (covered.has(id)) return;
      const c = CONTENT[id] ?? {};
      const cs = c.cs ?? 1;
      const rs = c.rs ?? 1;
      for (let y = 0; y < rs; y++) for (let x = 0; x < cs; x++) covered.add(`${COLS[ci + x]}${row + y}`);
      out.push(
        <CellBox key={id} $c={ci + 2} $r={ri + 2} $cs={cs} $rs={rs} $right={c.right ?? L} $bottom={c.bottom ?? L}
          $bg={c.bg ?? '#fff'} $align={JUSTIFY[c.a ?? 'l']} $mid={!!c.mid} $title={!!c.size}>
          {c.t && <Fit w={c.w!} size={c.size ?? 30} color="#000" font={SHEET}>{c.t}</Fit>}
          {id === 'Q76' && <Selection />}
        </CellBox>,
      );
    });
    out.push(<Sliver key={`s${row}`} $r={ri + 2} />);
  });
  return out;
}
const Sliver = styled.div<{ $r: number }>`
  grid-column: 11;
  grid-row: ${(p) => p.$r};
  background: #fff;
  border-right: 1px solid #999;
  border-bottom: 1px solid ${L};
`;
const HeadEnd = styled.div`
  border-bottom: 1px solid #999;
`;
const ScrollButton = styled.div`
  display: flex;
  align-items: center;
  justify-content: center;
  flex: none;
  width: 19px;
  height: 19px;
  background: #fff;
  border: 1px solid #ababab;
`;
const VScroll = styled.div`
  display: flex;
  flex-direction: column;
  width: 19px;
  height: 718px;
  margin: 2px 0 0 3px;
  background: #dadada;
`;
const VThumb = styled.div`
  height: 108px;
  margin-top: 572px;
  background: #fff;
  border: 1px solid #ababab;
`;
const Arrow = ({ dir }: { dir: 'up' | 'down' | 'left' | 'right' }) => {
  const d = { up: 'M0 7H10L5 1.5Z', down: 'M0 2H10L5 7.5Z', left: 'M7.5 0V10L2.5 5Z', right: 'M2.5 0V10L7.5 5Z' }[dir];
  return <svg width="10" height="10" viewBox="0 0 10 10"><path d={d} fill="#6a6a6a" /></svg>;
};

const Sheet = () => (
  <Work>
    <Grid>
      <Corner><svg width="27" height="27" viewBox="0 0 27 27"><path d="M27 0V27H0Z" fill="#b3b3b3" /></svg></Corner>
      {COLS.map((c) => (
        <ColHead key={c} $sel={c === 'Q'}><Fit w={HEAD_W[c]} size={24} color={c === 'Q' ? '#1f5c3a' : '#000'}>{c}</Fit></ColHead>
      ))}
      <HeadEnd />
      {ROWS.map((r) => (
        <RowHead key={r} $sel={r === 76} $tall={r === 78}><Fit w={26} size={24} color={r === 76 ? '#1f5c3a' : '#000'}>{r}</Fit></RowHead>
      ))}
      {cells()}
    </Grid>
    <VScroll>
      <ScrollButton><Arrow dir="up" /></ScrollButton>
      <VThumb />
      <ScrollButton><Arrow dir="down" /></ScrollButton>
    </VScroll>
  </Work>
);

/* ---------- sheet tabs and status bar ---------- */

const SheetTabs = styled.section`
  display: flex;
  align-items: center;
  flex: none;
  height: 29px;
  background: #e6e6e6;
  border-bottom: 1px solid #c3c3c3;
`;
const SheetTab = styled.div`
  align-self: flex-start;
  width: 176px;
  height: 26px;
  margin: -1px 0 0 41px;
  padding: 1px 0 0 11px;
  background: #fff;
  border: solid #999;
  border-width: 0 1px;
  box-shadow: inset 0 -2px ${GREEN};
`;
const HScroll = styled.div`
  display: flex;
  width: 802px;
  height: 19px;
  margin-left: 15px;
  background: #dadada;
`;
const HThumb = styled.div`
  width: 78px;
  margin: 0 566px 0 120px;
  background: #fff;
  border: 1px solid #ababab;
`;
const TabsBottom = () => (
  <SheetTabs>
    <Item $ml={28}><svg width="5" height="10" viewBox="0 0 5 10"><path d="M5 0V10L0 5Z" fill="#bdbdbd" /></svg></Item>
    <Item $ml={24}><svg width="5" height="10" viewBox="0 0 5 10"><path d="M0 0V10L5 5Z" fill="#bdbdbd" /></svg></Item>
    <SheetTab><Fit w={152} size={16} weight={700} color={GREEN}>Погрешности 10%</Fit></SheetTab>
    <Item $ml={33}><svg width="20" height="20" viewBox="0 0 20 20" fill="none" stroke="#777"><circle cx="10" cy="10" r="9.3" strokeWidth="1.3" /><path d="M10 5V15M5 10H15" strokeWidth="2" /></svg></Item>
    <Dots $ml={743} $mt={0}><i /><i /><i /></Dots>
    <HScroll>
      <ScrollButton><Arrow dir="left" /></ScrollButton>
      <HThumb />
      <ScrollButton><Arrow dir="right" /></ScrollButton>
    </HScroll>
  </SheetTabs>
);

const StatusBar = styled.section`
  display: flex;
  align-items: center;
  justify-content: flex-end;
  flex: none;
  height: 26px;
  padding-right: 10px;
  background: #f3f2f1;
`;
const ViewButton = styled.div<{ $on?: boolean }>`
  display: flex;
  align-items: center;
  justify-content: center;
  width: 50px;
  height: 26px;
  padding-right: 1px;
  background: ${(p) => (p.$on ? '#c6c4c2' : 'transparent')};
`;
const Status = () => (
  <StatusBar>
    <ViewButton $on><svg width="17" height="17" viewBox="0 0 17 17" fill="none" stroke="#444" strokeWidth="1.5"><path d="M.8.8H16.2V16.2H.8ZM.8 6H16.2M.8 11.2H16.2M6 .8V16.2M11.2 .8V16.2" /></svg></ViewButton>
    <ViewButton><svg width="18" height="17" viewBox="0 0 18 17" fill="none" stroke="#666" strokeWidth="1.5"><path d="M.8.8H17.2V16.2H.8ZM4.5 3.5H13.5V13.5H4.5ZM6.5 6.3H11.5M6.5 8.6H11.5M6.5 11H11.5" /></svg></ViewButton>
    <ViewButton><svg width="18" height="17" viewBox="0 0 18 17" fill="none" stroke="#666" strokeWidth="1.5"><path d="M.8.8H17.2V16.2H.8ZM.8 10H11.5V.8M6.3 .8V10" /></svg></ViewButton>
    <Item $ml={7}><svg width="10" height="2" viewBox="0 0 10 2"><path d="M0 1H10" stroke="#444" strokeWidth="1.3" /></svg></Item>
    <Item $ml={6}><svg width="125" height="14" viewBox="0 0 125 14"><path d="M0 7.5H125M62.5 4V11" stroke="#a6a6a6" fill="none" /><path d="M69 0H75V14H69Z" fill="#777" /></svg></Item>
    <Item $ml={6}><svg width="10" height="10" viewBox="0 0 10 10"><path d="M0 5H10M5 0V10" stroke="#444" strokeWidth="1.3" /></svg></Item>
    <Fit ml={16} w={32} size={12.5} color="#666">145%</Fit>
  </StatusBar>
);

/* ---------- taskbar ---------- */

const TaskbarBox = styled.footer`
  display: flex;
  align-items: center;
  flex: none;
  height: 50px;
  background: linear-gradient(90deg, #cee6ee 0%, #d1e6ef 55%, #d2dfec 75%, #d3d9ea 100%);
`;
const AppButton = styled.div<{ $w: number; $ml: number; $on?: boolean }>`
  display: flex;
  align-items: center;
  justify-content: center;
  width: ${(p) => p.$w}px;
  height: 50px;
  margin-left: ${(p) => p.$ml}px;
  padding-right: 2px;
  background: ${(p) => (p.$on ? '#ebf4f9' : 'transparent')};
  box-shadow: inset 0 -3px #0078d7;
`;
const Clock = styled.div`
  display: flex;
  flex-direction: column;
  align-items: center;
  gap: 3px;
  margin-left: 17px;
`;
const ShowDesktop = styled.div`
  width: 1px;
  height: 50px;
  margin-left: 25px;
  background: #9aa3b5;
`;
const Taskbar = () => (
  <TaskbarBox>
    <Item $ml={20}><svg width="20" height="20" viewBox="0 0 20 20"><path d="M0 3 8.5 1.7V9.5H0ZM9.3 1.5 20 0V9.5H9.3ZM0 10.4H8.5V18.3L0 17ZM9.3 10.4H20V20L9.3 18.4Z" /></svg></Item>
    <AppButton $w={51} $ml={29}>
      <Item $mt={-2}><svg width="27" height="24" viewBox="0 0 27 24"><path d="M0 1Q0 0 1 0H11L13.5 2.5 12 5H0Z" fill="#dd9b0c" /><path d="M0 4.5H11.5L13.5 2.5H26Q27 2.5 27 3.5V22H0Z" fill="#ffd25e" /><path d="M5 23.5V15Q5 13 7 13H20Q22 13 22 15V23.5H18V18H9V23.5Z" fill="#3c94d8" /></svg></Item>
    </AppButton>
    <AppButton $w={51} $ml={11}>
      <svg width="28" height="28" viewBox="0 0 28 28">
        <defs><linearGradient id="fx" x1="0.8" y1="0" x2="0.3" y2="1"><stop offset="0" stopColor="#fff04a" /><stop offset=".4" stopColor="#ffa01f" /><stop offset=".7" stopColor="#ff3f43" /><stop offset="1" stopColor="#e3157f" /></linearGradient></defs>
        <path d="M3 7 4 4 7 7Q10 4.5 13 5L17.5 0Q20 4 23 6 29 13 27 19 23.5 28 14 28 2.5 27.5.5 16 .5 11 3 7Z" fill="url(#fx)" />
        <circle cx="14" cy="15" r="6.3" fill="#7542e5" /><path d="M5 11Q9 8 13 11L17 12Q15 14.5 12 14 9 16 12 19 17 21 20 16 20 23 14 23.5 6 22 5 11Z" fill="#ff8b26" />
      </svg>
    </AppButton>
    <AppButton $w={51} $ml={11}>
      <svg width="28" height="28" viewBox="0 0 28 28"><circle cx="14" cy="14" r="13.7" fill="#1ed760" /><g fill="none" stroke="#0b1a10" strokeLinecap="round"><path d="M6 10Q14 7 22.5 11.4" strokeWidth="2.7" /><path d="M6.8 14.6Q14 12.2 21 16" strokeWidth="2.3" /><path d="M7.5 18.9Q13.5 17 19.5 20" strokeWidth="1.9" /></g></svg>
    </AppButton>
    <AppButton $w={61} $ml={6} $on>
      <svg width="29" height="28" viewBox="0 0 29 28">
        <path d="M7 1Q7 0 8 0H18V7H7Z" fill="#21a366" /><path d="M18 0H28Q29 0 29 1V7H18Z" fill="#33c481" /><path d="M7 7H18V14H7Z" fill="#107c41" /><path d="M18 7H29V14H18Z" fill="#21a366" /><path d="M7 14H18V21H7Z" fill="#185c37" /><path d="M18 14H29V21H18Z" fill="#107c41" /><path d="M7 21H29V27Q29 28 28 28H8Q7 28 7 27Z" fill="#185c37" />
        <rect y="6" width="15" height="16" rx="1" fill="#107c41" /><path d="M4.3 9.8 10.5 18.2M10.5 9.8 4.3 18.2" stroke="#fff" strokeWidth="2" />
      </svg>
    </AppButton>
    <Item $ml={1181}><svg width="16" height="9" viewBox="0 0 16 9"><path d="M.6 8.4 8 1 15.4 8.4" fill="none" stroke="#000" strokeWidth="1.4" /></svg></Item>
    <Item $ml={12}>
      <svg width="20" height="20" viewBox="0 0 20 20" fill="none" stroke="#111" strokeWidth="1.3"><path d="M1 3 19.3.8V17M13 17.5 1 16.5V3" /><path d="M6 8Q8 4.5 12.5 6.5M12.8 3.8V7H9.5M13.5 10Q12 14 7 12M6 15V11.7H9" /><circle cx="15.5" cy="15.5" r="4.4" fill="#ff9100" stroke="none" /></svg>
    </Item>
    <Item $ml={10}>
      <svg width="20" height="14" viewBox="0 0 20 14" fill="none" stroke="#111" strokeWidth="1.2"><path d="M8 3.2H18V12.8H3V7M18.6 6H20V10H18.6" /><path d="M4.5 5.5H12V10.5H5.5V7Z" fill="#111" stroke="none" /><path d="M1.6 0V2.5M4.6 0V2.5M.5 2.5H5.7V5Q3 6.6.5 5ZM3 5.5V8" /></svg>
    </Item>
    <Item $ml={11}><svg width="18" height="20" viewBox="0 0 18 20"><path d="M.5 19.5 5 12Q8 4 18 .5 17.5 10 8.5 14L3.5 15.5Z" fill="#9a5fc4" /><path d="M.5 19.5Q7 10 18 .5" stroke="#5f2a91" fill="none" /></svg></Item>
    <Item $ml={14}><svg width="16" height="16" viewBox="0 0 16 16" fill="none" stroke="#222" strokeWidth="1.3"><path d="M.7 15Q1 1.5 15.5 1M4.5 15.3Q5 6 15.5 5.2M8.5 15.5Q9 10 15.5 9.4" /><circle cx="14" cy="14" r="1.6" fill="#111" stroke="none" /></svg></Item>
    <Item $ml={11}><svg width="20" height="16" viewBox="0 0 20 16" fill="none" stroke="#111" strokeWidth="1.2"><path d="M.6 5.5H3.5L7.5 1.5V14.5L3.5 10.5H.6ZM10 5.5Q11.6 8 10 10.5" /><path d="M13 3.5Q16 8 13 12.5M16 1Q21.5 8 16 15" stroke="#8d93a5" /></svg></Item>
    <Fit ml={13} w={29} size={15} color="#111">ENG</Fit>
    <Clock>
      <Fit w={55} size={15} color="#111">9:21 AM</Fit>
      <Fit w={67} size={15} color="#111">3/14/2021</Fit>
    </Clock>
    <Item $ml={26}><svg width="24" height="19" viewBox="0 0 24 19"><path d="M.5 0 3.5 1V18.5H.5ZM20.5 1 23.5 0V18.5H20.5ZM5.5 3.5 12 10.5 18.5 3.5V18.5H15.5V11.5L12 15 8.5 11.5V18.5H5.5Z" fill="#111" /></svg></Item>
    <Item $ml={33}><svg width="20" height="20" viewBox="0 0 20 20"><path d="M0 0H20V15H11L7.5 19V15H0Z" /><path d="M4 4H16M4 7.5H16M4 11H12" stroke="#d3d9ea" strokeWidth="1.3" /><path d="M16.5 9.5Q18 15 12.5 16.5 15 20.5 18.5 18 21.5 14 16.5 9.5Z" stroke="#d3d9ea" /></svg></Item>
    <ShowDesktop />
  </TaskbarBox>
);

export default function App() {
  return (
    <Screen>
      <Global />
      <Title />
      <Tabs />
      <RibbonBar />
      <Formula />
      <Sheet />
      <TabsBottom />
      <Status />
      <Taskbar />
    </Screen>
  );
}
